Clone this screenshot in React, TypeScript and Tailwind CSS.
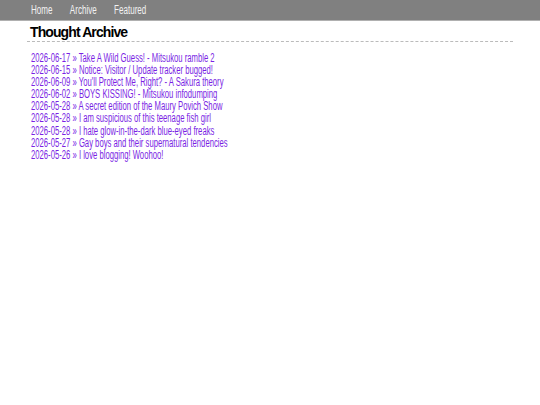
const posts = [
  ["2026-06-17", "Take A Wild Guess! - Mitsukou ramble 2"],
  ["2026-06-15", "Notice: Visitor / Update tracker bugged!"],
  ["2026-06-09", "You'll Protect Me, Right? - A Sakura theory"],
  ["2026-06-02", "BOYS KISSING! - Mitsukou infodumping"],
  ["2026-05-28", "A secret edition of the Maury Povich Show"],
  ["2026-05-28", "I am suspicious of this teenage fish girl"],
  ["2026-05-28", "I hate glow-in-the-dark blue-eyed freaks"],
  ["2026-05-27", "Gay boys and their supernatural tendencies"],
  ["2026-05-26", "I love blogging! Woohoo!"],
]

export default function App() {
  return (
    <div className="min-h-[405px] bg-white font-['Liberation_Sans',Arial,sans-serif]">
      {/* top nav, condensed face faked with a horizontal squeeze */}
      <nav className="h-[21px] bg-[#808080] border-b border-[#b0b0b0] flex items-center pl-[31px] text-[12px] text-[#f2f2f2]">
        <div className="flex gap-[26px] origin-left scale-x-[0.67]">
          <a>Home</a>
          <a>Archive</a>
          <a>Featured</a>
        </div>
      </nav>

      <main className="ml-[27px] w-[486px]">
        <h1 className="mt-[3px] pl-[3px] text-[14px] leading-[17px] font-bold tracking-[-0.9px] text-black border-b border-dashed border-[#bbbbbb]">
          Thought Archive
        </h1>
        <ul className="mt-[10px] pl-[4px] text-[12.5px] leading-[12.1px] text-[#7a1fe4]">
          {posts.map(([date, title], i) => (
            <li key={i} className="origin-left scale-x-[0.615] whitespace-nowrap">
              <a>
                {date} » {title}
              </a>
            </li>
          ))}
        </ul>
      </main>
    </div>
  )
}
